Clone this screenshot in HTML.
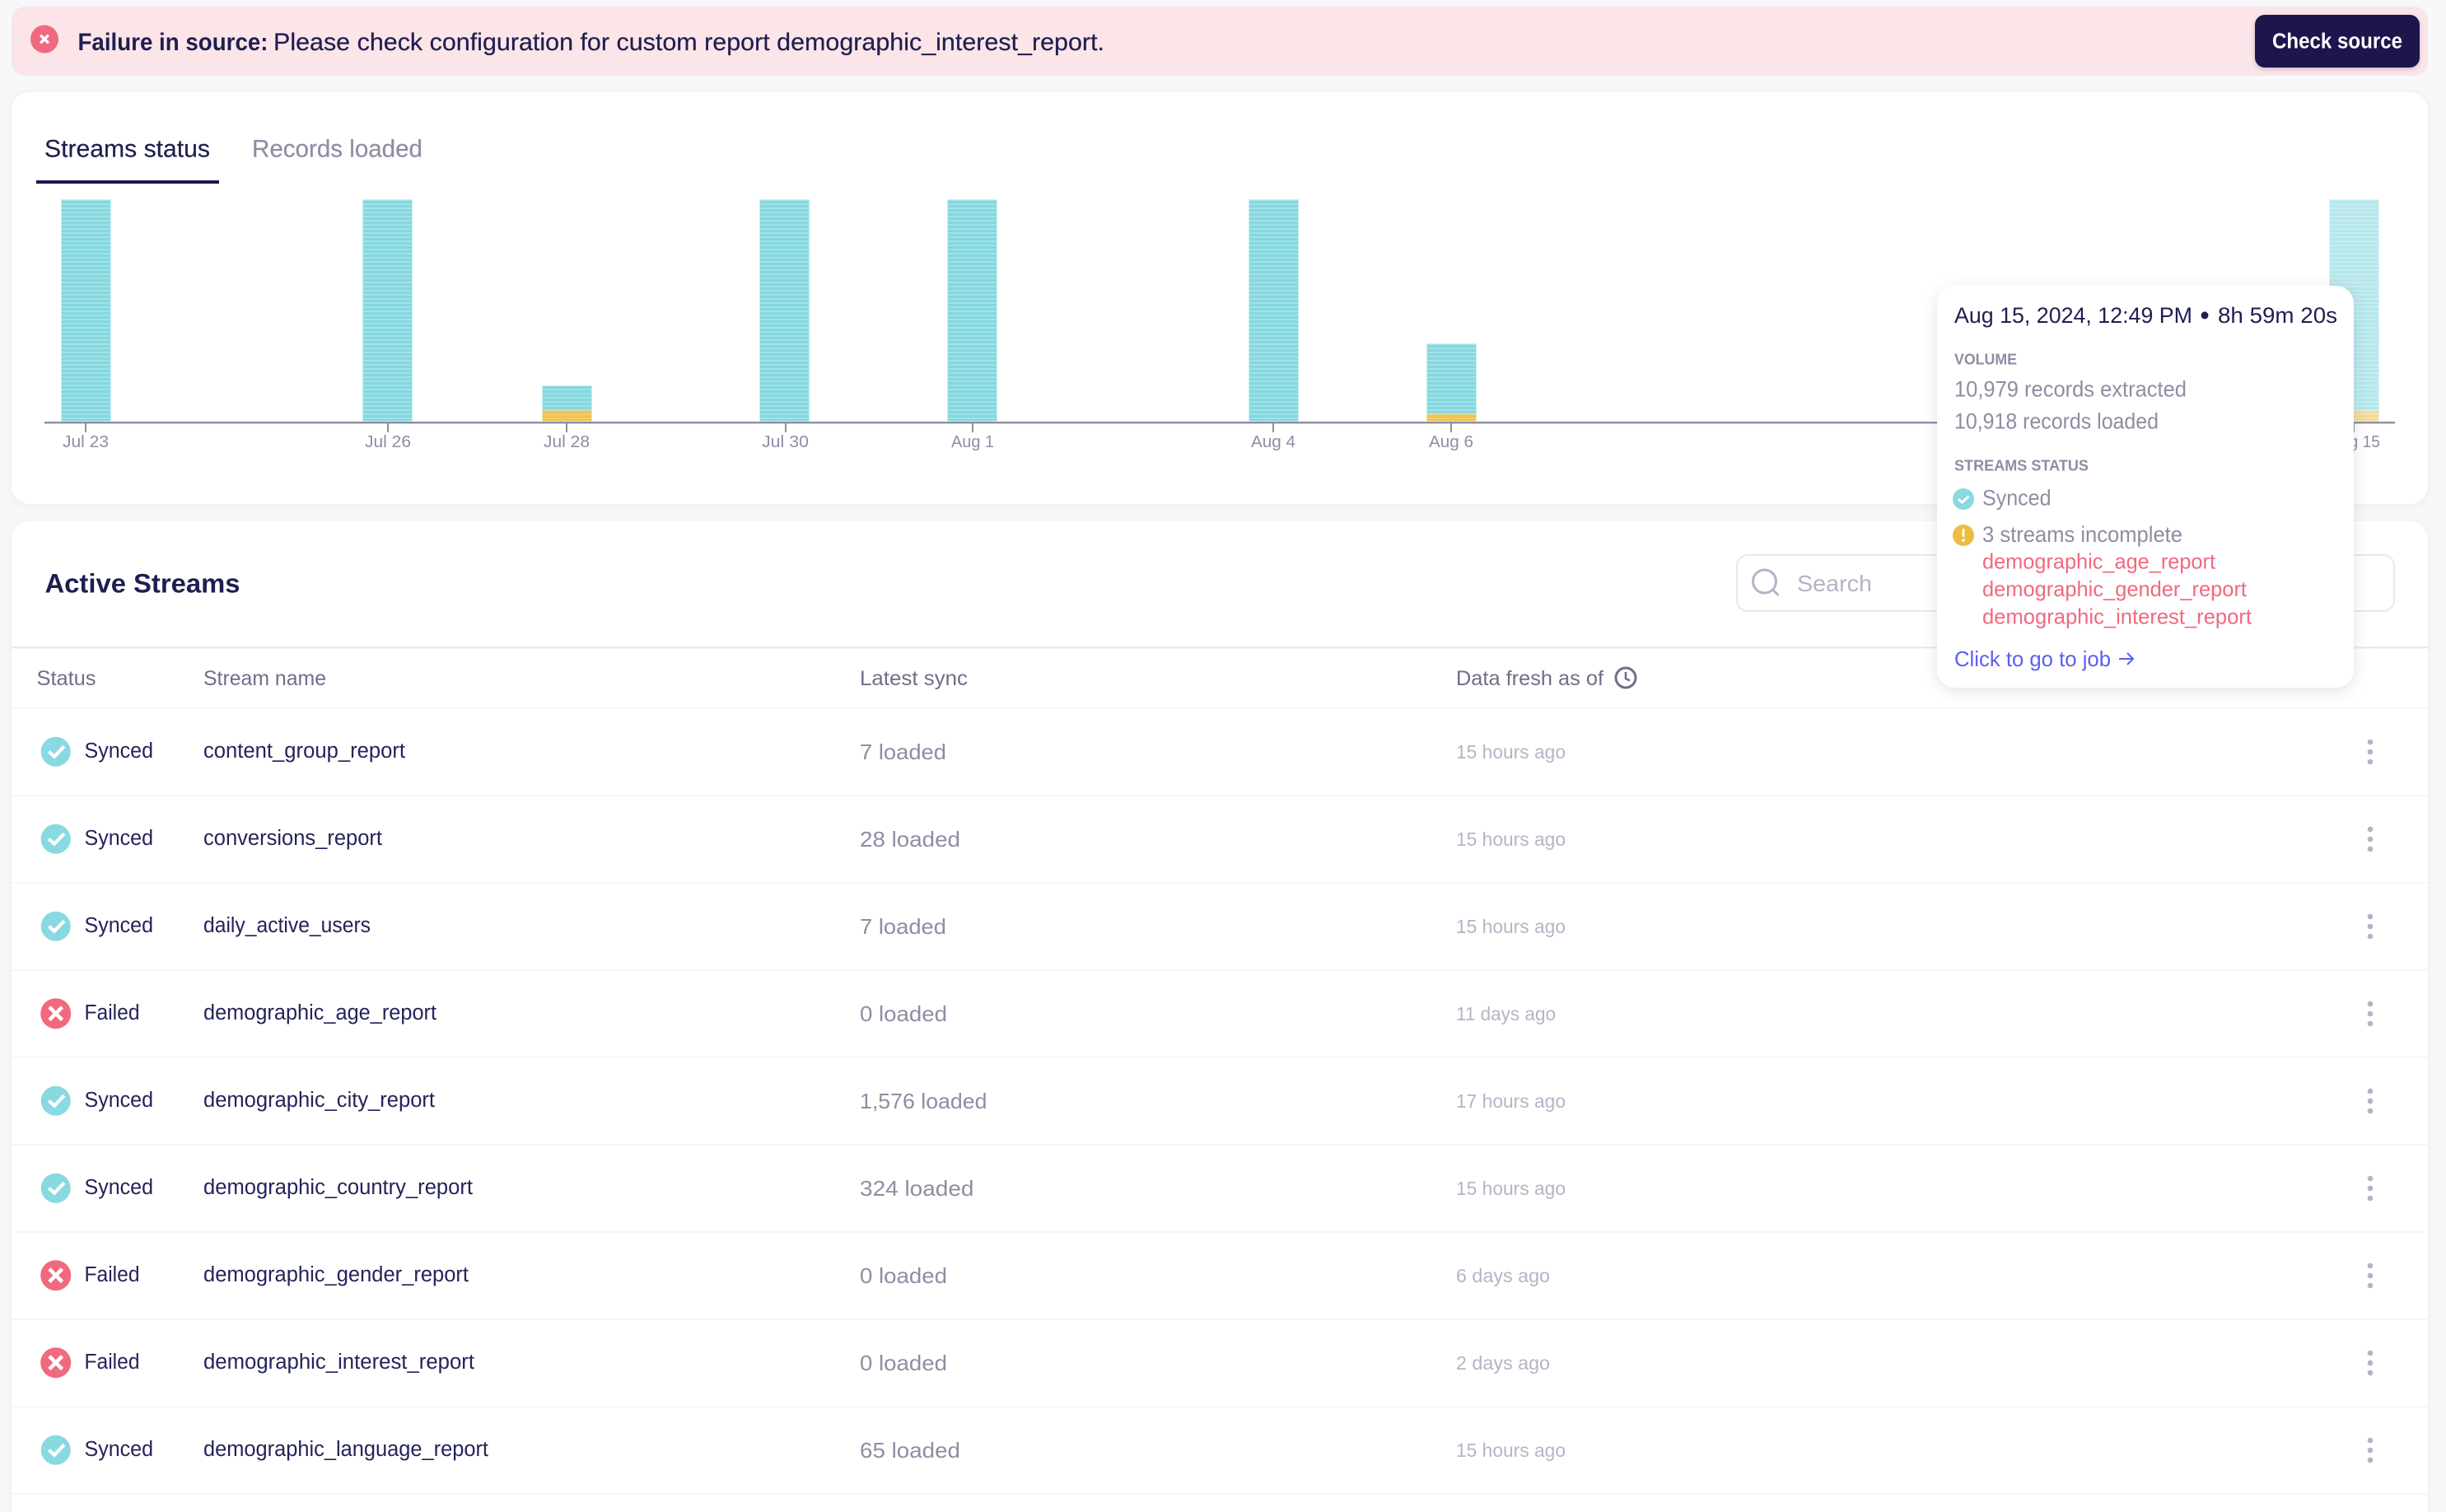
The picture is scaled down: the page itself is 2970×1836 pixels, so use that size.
<!DOCTYPE html>
<html><head><meta charset="utf-8"><title>Streams</title>
<style>
html,body{margin:0;padding:0;background:#f8f8fb;width:2970px;height:1836px;overflow:hidden}
svg{display:block}
text{font-family:"Liberation Sans",sans-serif;white-space:pre}
.n{fill:#1f1e50}
.m{stroke:#1f1e50;stroke-width:.2}
.r{font-size:25.5px;fill:#24235a}
.h{font-size:25px;fill:#6f6e89}
.l{font-size:26px;fill:#8e8da3}
.f{font-size:23px;fill:#b5b4c6}
.a{font-size:20.5px;fill:#8e8da3}
.t{font-size:26.5px;fill:#8e8da3}
.c{font-size:18px;font-weight:bold;fill:#8e8da3}
.e{font-size:26px;fill:#f0697f}
</style></head><body>
<svg width="2970" height="1836" viewBox="0 0 2970 1836" xmlns="http://www.w3.org/2000/svg">
<defs>
<filter id="s" x="-5%" y="-5%" width="110%" height="110%"><feDropShadow dx="0" dy="2" stdDeviation="5" flood-color="#1a194d" flood-opacity=".05"/></filter>
<filter id="ts" x="-15%" y="-15%" width="130%" height="130%"><feDropShadow dx="0" dy="4" stdDeviation="9" flood-color="#1a194d" flood-opacity=".11"/></filter>
<filter id="bs" x="-15%" y="-30%" width="130%" height="160%"><feDropShadow dx="0" dy="2" stdDeviation="3" flood-color="#1a194d" flood-opacity=".2"/></filter>
<pattern id="tl" width="60" height="5" patternUnits="userSpaceOnUse" y="2"><rect width="60" height="5" fill="#85d7df"/><rect width="60" height="2" fill="#a0e2e7"/></pattern>
<pattern id="yl" width="60" height="5" patternUnits="userSpaceOnUse" y="2"><rect width="60" height="5" fill="#eec352"/><rect width="60" height="2" fill="#f1cc6c"/></pattern>
<symbol id="ok" viewBox="-18 -18 36 36" overflow="visible"><circle r="18" fill="#88d9e0"/><path d="M-8.4 0-1.7 6 10.2-6.4" fill="none" stroke="#fff" stroke-width="4.2"/></symbol>
<symbol id="no" viewBox="-18 -18 36 36" overflow="visible"><circle r="18.5" fill="#f0697f"/><path d="M-7.8-7.8 7.8 7.8M7.8-7.8-7.8 7.8" fill="none" stroke="#fff" stroke-width="4.6"/></symbol>
</defs>

<!-- banner -->
<rect x="14" y="8" width="2934" height="84" rx="16" fill="#fbe5e8"/>
<circle cx="54" cy="47.5" r="17" fill="#f0697f"/>
<path d="M49.2 42.7 58.8 52.3M58.8 42.7 49.2 52.3" stroke="#fff" stroke-width="3.4" fill="none"/>
<text x="94.5" y="61" font-size="29.5" font-weight="bold" class="n" textLength="231" lengthAdjust="spacingAndGlyphs">Failure in source:</text>
<text x="332" y="61" font-size="29.5" class="n m" textLength="1009" lengthAdjust="spacingAndGlyphs">Please check configuration for custom report demographic_interest_report.</text>
<rect x="2738" y="18" width="200" height="64" rx="12" fill="#1a194d" filter="url(#bs)"/>
<text x="2759" y="58.5" font-size="25.5" font-weight="bold" fill="#fff" textLength="158" lengthAdjust="spacingAndGlyphs">Check source</text>

<!-- chart card -->
<rect x="14" y="112" width="2934" height="500" rx="22" fill="#fff" filter="url(#s)"/>
<text x="54" y="190.5" font-size="29.5" class="n m" textLength="201" lengthAdjust="spacingAndGlyphs">Streams status</text>
<text x="306" y="190.5" font-size="29.5" fill="#8e8da3" stroke="#8e8da3" stroke-width=".2" textLength="207" lengthAdjust="spacingAndGlyphs">Records loaded</text>
<rect x="44" y="219" width="222" height="4" fill="#1a194d"/>

<g stroke="#c6eef1" stroke-width="1">
<rect x="74.5" y="242.5" width="60" height="269" fill="url(#tl)"/>
<rect x="440.5" y="242.5" width="60" height="269" fill="url(#tl)"/>
<rect x="658.5" y="468.5" width="60" height="30" fill="url(#tl)"/>
<rect x="922.5" y="242.5" width="60" height="269" fill="url(#tl)"/>
<rect x="1150.5" y="242.5" width="60" height="269" fill="url(#tl)"/>
<rect x="1516.5" y="242.5" width="60" height="269" fill="url(#tl)"/>
<rect x="1732.5" y="417.5" width="60" height="85" fill="url(#tl)"/>
</g>
<rect x="658.5" y="498.5" width="60" height="13" fill="url(#yl)"/>
<rect x="1732.5" y="503" width="60" height="8.5" fill="url(#yl)"/>
<g opacity=".6">
<rect x="2828.5" y="242.5" width="60" height="256" fill="url(#tl)" stroke="#c6eef1"/>
<rect x="2828.5" y="499" width="60" height="12.5" fill="url(#yl)"/>
</g>
<rect x="54" y="512" width="2854" height="2.4" fill="#8e8da3"/>
<g fill="#8e8da3">
<rect x="103" y="513" width="2" height="12"/><rect x="470" y="513" width="2" height="12"/><rect x="687" y="513" width="2" height="12"/><rect x="953" y="513" width="2" height="12"/><rect x="1180" y="513" width="2" height="12"/><rect x="1545" y="513" width="2" height="12"/><rect x="1761" y="513" width="2" height="12"/><rect x="2857" y="513" width="2" height="12"/>
</g>
<text x="76" y="543" class="a" textLength="56" lengthAdjust="spacingAndGlyphs">Jul 23</text>
<text x="443" y="543" class="a" textLength="56" lengthAdjust="spacingAndGlyphs">Jul 26</text>
<text x="660" y="543" class="a" textLength="56" lengthAdjust="spacingAndGlyphs">Jul 28</text>
<text x="925" y="543" class="a" textLength="57" lengthAdjust="spacingAndGlyphs">Jul 30</text>
<text x="1155" y="543" class="a" textLength="52" lengthAdjust="spacingAndGlyphs">Aug 1</text>
<text x="1519" y="543" class="a" textLength="54" lengthAdjust="spacingAndGlyphs">Aug 4</text>
<text x="1735" y="543" class="a" textLength="54" lengthAdjust="spacingAndGlyphs">Aug 6</text>
<text x="2829" y="543" class="a" textLength="61" lengthAdjust="spacingAndGlyphs">Aug 15</text>

<!-- streams card -->
<rect x="14" y="633" width="2934" height="1240" rx="22" fill="#fff" filter="url(#s)"/>
<text x="54.5" y="719.5" font-size="32" font-weight="bold" class="n" textLength="237" lengthAdjust="spacingAndGlyphs">Active Streams</text>
<rect x="2109" y="674" width="798" height="68" rx="13" fill="#fff" stroke="#e8e7ef" stroke-width="2"/>
<circle cx="2142.5" cy="706" r="14" fill="none" stroke="#b5b4c6" stroke-width="3"/>
<path d="M2152.5 716 2159.5 723" stroke="#b5b4c6" stroke-width="3" fill="none"/>
<text x="2182" y="718" font-size="28" fill="#b5b4c6" textLength="91" lengthAdjust="spacingAndGlyphs">Search</text>
<rect x="14" y="785" width="2934" height="2.4" fill="#e9e9f0"/>

<text x="44.5" y="832" class="h" textLength="72" lengthAdjust="spacingAndGlyphs">Status</text>
<text x="247" y="832" class="h" textLength="149" lengthAdjust="spacingAndGlyphs">Stream name</text>
<text x="1044" y="832" class="h" textLength="131" lengthAdjust="spacingAndGlyphs">Latest sync</text>
<text x="1768" y="832" class="h" textLength="179" lengthAdjust="spacingAndGlyphs">Data fresh as of</text>
<circle cx="1974" cy="823" r="12" fill="none" stroke="#6f6e89" stroke-width="3"/>
<path d="M1974 816V824L1979 826.5" fill="none" stroke="#6f6e89" stroke-width="2.6"/>

<g fill="#f6f6f9">
<rect x="14" y="859" width="2934" height="2"/><rect x="14" y="965" width="2934" height="2"/><rect x="14" y="1071" width="2934" height="2"/><rect x="14" y="1177" width="2934" height="2"/><rect x="14" y="1283" width="2934" height="2"/><rect x="14" y="1389" width="2934" height="2"/><rect x="14" y="1495" width="2934" height="2"/><rect x="14" y="1601" width="2934" height="2"/><rect x="14" y="1707" width="2934" height="2"/><rect x="14" y="1813" width="2934" height="2"/>
</g>

<!-- rows -->
<use href="#ok" x="49.7" y="894.7" width="36" height="36"/>
<text x="102.5" y="920" class="r" textLength="83.5" lengthAdjust="spacingAndGlyphs">Synced</text>
<text x="247" y="920" class="r" textLength="245" lengthAdjust="spacingAndGlyphs">content_group_report</text>
<text x="1044" y="922" class="l" textLength="105" lengthAdjust="spacingAndGlyphs">7 loaded</text>
<text x="1768" y="921" class="f" textLength="133" lengthAdjust="spacingAndGlyphs">15 hours ago</text>

<use href="#ok" x="49.7" y="1000.7" width="36" height="36"/>
<text x="102.5" y="1026" class="r" textLength="83.5" lengthAdjust="spacingAndGlyphs">Synced</text>
<text x="247" y="1026" class="r" textLength="217" lengthAdjust="spacingAndGlyphs">conversions_report</text>
<text x="1044" y="1028" class="l" textLength="122" lengthAdjust="spacingAndGlyphs">28 loaded</text>
<text x="1768" y="1027" class="f" textLength="133" lengthAdjust="spacingAndGlyphs">15 hours ago</text>

<use href="#ok" x="49.7" y="1106.7" width="36" height="36"/>
<text x="102.5" y="1132" class="r" textLength="83.5" lengthAdjust="spacingAndGlyphs">Synced</text>
<text x="247" y="1132" class="r" textLength="203" lengthAdjust="spacingAndGlyphs">daily_active_users</text>
<text x="1044" y="1134" class="l" textLength="105" lengthAdjust="spacingAndGlyphs">7 loaded</text>
<text x="1768" y="1133" class="f" textLength="133" lengthAdjust="spacingAndGlyphs">15 hours ago</text>

<use href="#no" x="49.7" y="1212.7" width="36" height="36"/>
<text x="102.5" y="1238" class="r" textLength="67" lengthAdjust="spacingAndGlyphs">Failed</text>
<text x="247" y="1238" class="r" textLength="283" lengthAdjust="spacingAndGlyphs">demographic_age_report</text>
<text x="1044" y="1240" class="l" textLength="106" lengthAdjust="spacingAndGlyphs">0 loaded</text>
<text x="1768" y="1239" class="f" textLength="121" lengthAdjust="spacingAndGlyphs">11 days ago</text>

<use href="#ok" x="49.7" y="1318.7" width="36" height="36"/>
<text x="102.5" y="1344" class="r" textLength="83.5" lengthAdjust="spacingAndGlyphs">Synced</text>
<text x="247" y="1344" class="r" textLength="281" lengthAdjust="spacingAndGlyphs">demographic_city_report</text>
<text x="1044" y="1346" class="l" textLength="154.5" lengthAdjust="spacingAndGlyphs">1,576 loaded</text>
<text x="1768" y="1345" class="f" textLength="133" lengthAdjust="spacingAndGlyphs">17 hours ago</text>

<use href="#ok" x="49.7" y="1424.7" width="36" height="36"/>
<text x="102.5" y="1450" class="r" textLength="83.5" lengthAdjust="spacingAndGlyphs">Synced</text>
<text x="247" y="1450" class="r" textLength="327" lengthAdjust="spacingAndGlyphs">demographic_country_report</text>
<text x="1044" y="1452" class="l" textLength="138.5" lengthAdjust="spacingAndGlyphs">324 loaded</text>
<text x="1768" y="1451" class="f" textLength="133" lengthAdjust="spacingAndGlyphs">15 hours ago</text>

<use href="#no" x="49.7" y="1530.7" width="36" height="36"/>
<text x="102.5" y="1556" class="r" textLength="67" lengthAdjust="spacingAndGlyphs">Failed</text>
<text x="247" y="1556" class="r" textLength="322" lengthAdjust="spacingAndGlyphs">demographic_gender_report</text>
<text x="1044" y="1558" class="l" textLength="106" lengthAdjust="spacingAndGlyphs">0 loaded</text>
<text x="1768" y="1557" class="f" textLength="114" lengthAdjust="spacingAndGlyphs">6 days ago</text>

<use href="#no" x="49.7" y="1636.7" width="36" height="36"/>
<text x="102.5" y="1662" class="r" textLength="67" lengthAdjust="spacingAndGlyphs">Failed</text>
<text x="247" y="1662" class="r" textLength="329" lengthAdjust="spacingAndGlyphs">demographic_interest_report</text>
<text x="1044" y="1664" class="l" textLength="106" lengthAdjust="spacingAndGlyphs">0 loaded</text>
<text x="1768" y="1663" class="f" textLength="114" lengthAdjust="spacingAndGlyphs">2 days ago</text>

<use href="#ok" x="49.7" y="1742.7" width="36" height="36"/>
<text x="102.5" y="1768" class="r" textLength="83.5" lengthAdjust="spacingAndGlyphs">Synced</text>
<text x="247" y="1768" class="r" textLength="346" lengthAdjust="spacingAndGlyphs">demographic_language_report</text>
<text x="1044" y="1770" class="l" textLength="122" lengthAdjust="spacingAndGlyphs">65 loaded</text>
<text x="1768" y="1769" class="f" textLength="133" lengthAdjust="spacingAndGlyphs">15 hours ago</text>

<g fill="#b5b4c6">
<circle cx="2878" cy="901" r="3.3"/><circle cx="2878" cy="913" r="3.3"/><circle cx="2878" cy="925" r="3.3"/>
<circle cx="2878" cy="1007" r="3.3"/><circle cx="2878" cy="1019" r="3.3"/><circle cx="2878" cy="1031" r="3.3"/>
<circle cx="2878" cy="1113" r="3.3"/><circle cx="2878" cy="1125" r="3.3"/><circle cx="2878" cy="1137" r="3.3"/>
<circle cx="2878" cy="1219" r="3.3"/><circle cx="2878" cy="1231" r="3.3"/><circle cx="2878" cy="1243" r="3.3"/>
<circle cx="2878" cy="1325" r="3.3"/><circle cx="2878" cy="1337" r="3.3"/><circle cx="2878" cy="1349" r="3.3"/>
<circle cx="2878" cy="1431" r="3.3"/><circle cx="2878" cy="1443" r="3.3"/><circle cx="2878" cy="1455" r="3.3"/>
<circle cx="2878" cy="1537" r="3.3"/><circle cx="2878" cy="1549" r="3.3"/><circle cx="2878" cy="1561" r="3.3"/>
<circle cx="2878" cy="1643" r="3.3"/><circle cx="2878" cy="1655" r="3.3"/><circle cx="2878" cy="1667" r="3.3"/>
<circle cx="2878" cy="1749" r="3.3"/><circle cx="2878" cy="1761" r="3.3"/><circle cx="2878" cy="1773" r="3.3"/>
</g>

<!-- tooltip -->
<rect x="2352" y="347" width="506" height="488" rx="22" fill="#fff" filter="url(#ts)"/>
<text x="2373" y="392" font-size="26.5" class="n" textLength="289" lengthAdjust="spacingAndGlyphs">Aug 15, 2024, 12:49 PM</text>
<text x="2677" y="394" font-size="33" class="n" text-anchor="middle">•</text>
<text x="2693" y="392" font-size="26.5" class="n" textLength="145" lengthAdjust="spacingAndGlyphs">8h 59m 20s</text>
<text x="2373" y="442.5" class="c" textLength="76" lengthAdjust="spacingAndGlyphs">VOLUME</text>
<text x="2373" y="481.5" class="t" textLength="282" lengthAdjust="spacingAndGlyphs">10,979 records extracted</text>
<text x="2373" y="520.5" class="t" textLength="248" lengthAdjust="spacingAndGlyphs">10,918 records loaded</text>
<text x="2373" y="571.5" class="c" textLength="163" lengthAdjust="spacingAndGlyphs">STREAMS STATUS</text>
<circle cx="2384" cy="606" r="13" fill="#88d9e0"/>
<path d="M2378 606 2382.5 610 2390.5 602.5" fill="none" stroke="#fff" stroke-width="3"/>
<text x="2407" y="613.5" class="t" textLength="83.5" lengthAdjust="spacingAndGlyphs">Synced</text>
<circle cx="2384" cy="650" r="13" fill="#ecbd3e"/>
<rect x="2382.5" y="642" width="3" height="10" rx="1" fill="#fff"/><circle cx="2384" cy="656" r="1.8" fill="#fff"/>
<text x="2407" y="658" class="t" textLength="243" lengthAdjust="spacingAndGlyphs">3 streams incomplete</text>
<text x="2407" y="690.5" class="e" textLength="283" lengthAdjust="spacingAndGlyphs">demographic_age_report</text>
<text x="2407" y="724" class="e" textLength="321" lengthAdjust="spacingAndGlyphs">demographic_gender_report</text>
<text x="2407" y="757.5" class="e" textLength="327" lengthAdjust="spacingAndGlyphs">demographic_interest_report</text>
<text x="2373" y="809" font-size="26" fill="#5b5ff0" textLength="190" lengthAdjust="spacingAndGlyphs">Click to go to job</text>
<path d="M2573 800H2590M2583 793 2590 800 2583 807" fill="none" stroke="#5b5ff0" stroke-width="2"/>
</svg>
</body></html>
